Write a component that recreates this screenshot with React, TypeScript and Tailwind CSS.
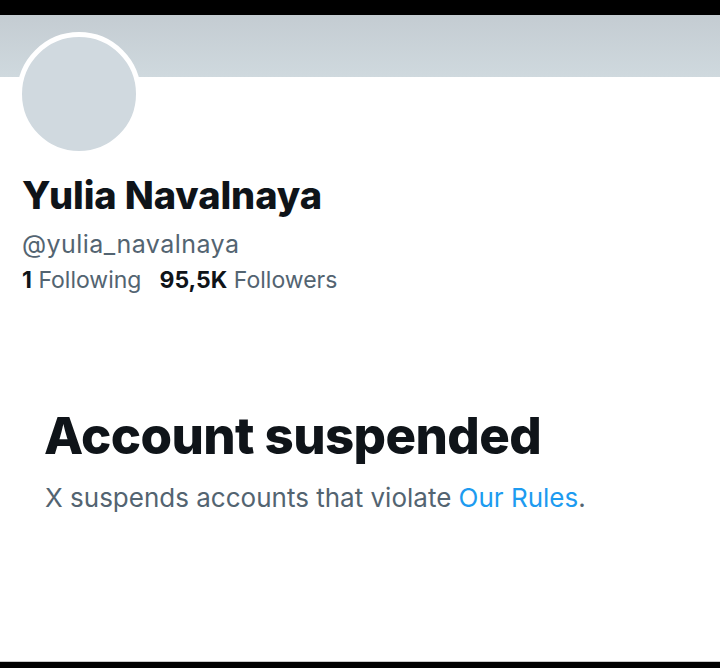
import React from "react";

export default function App() {
  return (
    <div className="w-[720px] h-[668px] flex flex-col bg-white overflow-hidden" style={{ fontFamily: "Inter, 'Liberation Sans', sans-serif" }}>
      <div className="h-[15px] bg-black shrink-0" />
      <div className="h-[62px] shrink-0 bg-gradient-to-b from-[#c4ccd2] to-[#cfd9de]" />
      <div className="flex-1 flex flex-col">
        <div className="-mt-[45px] ml-[17px] w-[124px] h-[124px] rounded-full border-[5px] border-white bg-[#d0d9df]" />
        <div className="ml-[22px] mt-[17px] text-[38px] leading-[44px] font-extrabold text-[#0f1419] tracking-[-0.1px]">Yulia Navalnaya</div>
        <div className="ml-[22px] mt-[12px] text-[25px] leading-[30px] text-[#536471] tracking-[0.45px]">@yulia_navalnaya</div>
        <div className="ml-[22px] mt-[7px] flex gap-[18px] text-[23px] leading-[28px] text-[#536471]">
          <span><span className="font-bold text-[#0f1419]">1</span> Following</span>
          <span><span className="font-bold text-[#0f1419]">95,5K</span> Followers</span>
        </div>
        <div className="ml-[44px] mt-[112px] text-[51px] leading-[60px] font-extrabold text-[#0f1419] tracking-[-0.6px]">Account suspended</div>
        <div className="ml-[45px] mt-[16px] text-[26px] leading-[32px] text-[#536471]">
          X suspends accounts that violate <span className="text-[#1d9bf0]">Our Rules</span>.
        </div>
      </div>
      <div className="h-[7px] shrink-0 bg-black border-t border-[#c8c8c8]" />
    </div>
  );
}
